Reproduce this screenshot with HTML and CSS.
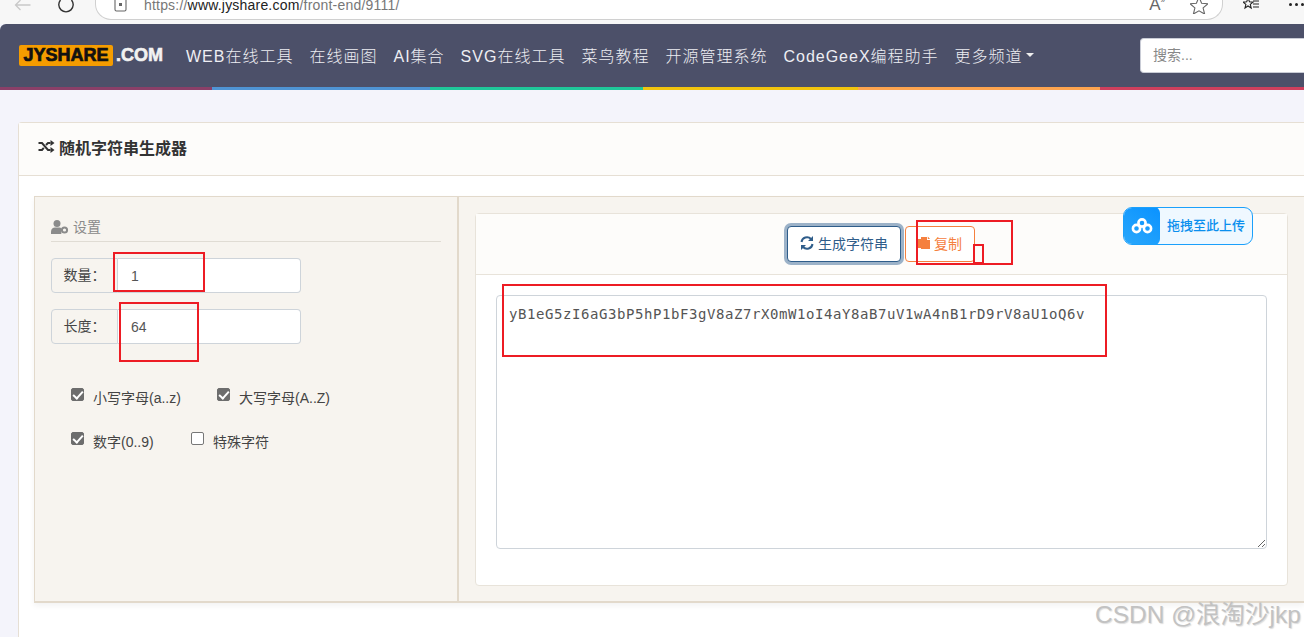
FILE: index.html
```html
<!DOCTYPE html>
<html lang="zh-CN">
<head>
<meta charset="utf-8">
<title>随机字符串生成器</title>
<link rel="stylesheet" href="styles.css">
</head>
<body>
<div class="chrome">
  <svg class="c-back" width="17" height="14" viewBox="0 0 17 14"><path d="M16.500 5H1.500M6.500 0L1.500 5l5 5" fill="none" stroke="#c9c9c9" stroke-width="1.300"/></svg>
  <svg class="c-reload" width="18" height="14" viewBox="0 0 18 14"><path d="M3.500 0a7.200 7.200 0 1 0 11 0" fill="none" stroke="#333" stroke-width="1.400"/></svg>
  <div class="addr">
    <svg class="addr-ic" width="13" height="12" viewBox="0 0 13 12"><path d="M1 0v9.500a1.500 1.500 0 0 0 1.500 1.500h8A1.500 1.500 0 0 0 12 9.500V0" fill="none" stroke="#666" stroke-width="1.100"/><rect x="5" y="3" width="3" height="3" fill="#666"/></svg>
    <span class="url"><span class="dim">https://</span>www.jyshare.com<span class="dim">/front-end/9111/</span></span>
    <span class="addr-a">A<sup>»</sup></span>
    <svg class="addr-star" width="18" height="14" viewBox="0 0 18 14"><path d="M9 -3l2.600 6.200 6.400.5-4.900 4.200 1.500 6.100L9 10.800l-5.600 3.200 1.500-6.100L0 3.700l6.400-.5z" fill="none" stroke="#666" stroke-width="1.100"/></svg>
  </div>
  <svg class="c-fav" width="18" height="12" viewBox="0 0 18 12"><path d="M5 -2l1.500 3.800 3.500.3-2.700 2.300.9 3.600L5 6l-3 2 .9-3.600L.2 2.100l3.500-.3z" fill="none" stroke="#222" stroke-width="1.100"/><path d="M10 1h6M10 4h6M10 7h6" stroke="#222" stroke-width="1"/></svg>
  <span class="c-more"><i></i><i></i><i></i></span>
</div>

<header class="nav">
  <div class="nav-row">
    <a class="logo"><span class="logo-box">JYSHARE</span><span class="logo-com">.COM</span></a>
    <a class="nav-link">WEB在线工具</a>
    <a class="nav-link">在线画图</a>
    <a class="nav-link">AI集合</a>
    <a class="nav-link">SVG在线工具</a>
    <a class="nav-link">菜鸟教程</a>
    <a class="nav-link">开源管理系统</a>
    <a class="nav-link">CodeGeeX编程助手</a>
    <a class="nav-link more">更多频道<span class="caret"></span></a>
    <input class="search" placeholder="搜索...">
  </div>
  <div class="stripe"><i class="s1"></i><i class="s2"></i><i class="s3"></i><i class="s4"></i><i class="s5"></i><i class="s6"></i></div>
</header>

<main class="page">
  <section class="card">
    <div class="card-head">
      <svg width="17" height="13" viewBox="0 0 16 13"><path d="M0 3h3.500l6 7H12M0 10h3.500l1.800-2.100M7.500 5L9.500 3H12" fill="none" stroke="#333" stroke-width="2"/><path d="M12 0l4 3-4 3zM12 7l4 3-4 3z" fill="#333"/></svg>
      <h1>随机字符串生成器</h1>
    </div>
    <div class="card-body">
      <div class="panels">
        <aside class="left">
          <div class="legend">
            <svg width="18" height="14" viewBox="0 0 18 14"><circle cx="6" cy="3.500" r="3.500" fill="#8b8b8b"/><path d="M0 14v-2.500C0 9 2 7.500 4 7.500h4.500c.8 0 1.300.2 1.800.5V14z" fill="#8b8b8b"/><circle cx="13.500" cy="10" r="2.600" fill="none" stroke="#8b8b8b" stroke-width="2"/></svg>
            <span>设置</span>
          </div>
          <div class="group"><label class="addon">数量：</label><input class="ginput" value="1"></div>
          <div class="group"><label class="addon">长度：</label><input class="ginput" value="64"></div>
          <div class="checks">
            <div class="check-row">
              <label class="chk w-a"><span class="box on"></span>小写字母(a..z)</label>
              <label class="chk"><span class="box on"></span>大写字母(A..Z)</label>
            </div>
            <div class="check-row">
              <label class="chk w-b"><span class="box on"></span>数字(0..9)</label>
              <label class="chk"><span class="box"></span>特殊字符</label>
            </div>
          </div>
        </aside>
        <div class="right">
          <div class="out">
            <div class="out-head">
              <button class="btn btn-gen">
                <svg width="14" height="14" viewBox="0 0 14 14"><path d="M1.500 6A5.500 5.500 0 0 1 11 3M12.500 8A5.500 5.500 0 0 1 3 11" fill="none" stroke="#2f5d8a" stroke-width="2"/><path d="M13 0v5H8zM1 14V9h5z" fill="#2f5d8a"/></svg>
                生成字符串
              </button>
              <button class="btn btn-copy">
                <svg width="12" height="14" viewBox="0 0 12 14"><path d="M0 3h3V1h6v3h3v9H3v-1H0z" fill="#f5803e"/><path d="M9.800 0.500L12 3H9.800z" fill="#f5803e"/></svg>
                复制
              </button>
            </div>
            <div class="out-body">
              <textarea class="result" spellcheck="false">yB1eG5zI6aG3bP5hP1bF3gV8aZ7rX0mW1oI4aY8aB7uV1wA4nB1rD9rV8aU1oQ6v</textarea>
            </div>
          </div>
        </div>
      </div>
    </div>
  </section>
</main>

<div class="upload">
  <span class="up-ic"><svg width="22" height="16" viewBox="0 0 22 16"><g fill="none" stroke="#fff" stroke-width="2.600"><circle cx="5.500" cy="10.500" r="3.600"/><circle cx="16.500" cy="10.500" r="3.600"/><circle cx="11" cy="5" r="3.600"/></g></svg></span>
  <span class="up-txt">拖拽至此上传</span>
</div>

<i class="mark m1"></i><i class="mark m2"></i><i class="mark m3"></i><i class="mark m4"></i><i class="mark m5"></i>
<div class="wm">CSDN @浪淘沙jkp</div>
</body>
</html>
```
FILE: styles.css
```css
* { box-sizing: border-box; }
html, body { margin: 0; height: 637px; overflow: hidden; }
body { font-family: "Liberation Sans", "Noto Sans CJK SC", sans-serif; background: #f4f4fb; position: relative; color: #333; }

.chrome { height: 24px; background: #f7f7f7; display: flex; align-items: flex-start; overflow: hidden; }
.c-back { margin: 0 0 0 14px; }
.c-reload { margin: 0 0 0 26px; }
.addr { width: 1129px; height: 20px; margin-left: 20px; background: #fff; border: 1px solid #d0d0d0; border-top: 0; border-radius: 0 0 16px 16px; display: flex; align-items: flex-start; padding-left: 18px; overflow: hidden; }
.url { font-size: 14px; line-height: 11px; margin-left: 17px; letter-spacing: .2px; color: #222; height: 12px; }
.dim { color: #777; }
.addr-a { margin-left: auto; font-size: 17px; line-height: 10px; color: #666; height: 12px; }
.addr-a sup { font-size: 8px; line-height: 0; }
.addr-star { margin: 0 14px 0 25px; }
.c-fav { margin-left: 20px; }
.c-more { margin-left: 28px; display: flex; gap: 3px; padding-top: 3px; }
.c-more i { width: 3px; height: 3px; border-radius: 50%; background: #222; }

.nav { background: #4c5069; height: 66px; display: flex; flex-direction: column; justify-content: space-between; border-radius: 6px 0 0 0; }
.nav-row { height: 63px; display: flex; align-items: center; padding-left: 19px; }
.logo { display: flex; align-items: center; margin-right: 23px; font-weight: 700; font-family: "Liberation Sans", sans-serif; }
.logo-box { background: #f59c00; color: #111; font-size: 18px; line-height: 21px; height: 21px; width: 94px; text-align: center; border-radius: 2px; font-weight: 700; -webkit-text-stroke: .7px #111; white-space: nowrap; }
.logo-com { color: #f2f2f2; font-size: 18px; margin-left: 3px; -webkit-text-stroke: .6px #f2f2f2; }
.nav-link { color: #eeeef3; font-family: "Liberation Sans", "Noto Sans CJK SC", sans-serif; font-size: 16px; letter-spacing: 1px; margin: 0 16px 2px 0; white-space: nowrap; font-weight: 300; }
.more { display: flex; align-items: center; margin-right: 0; }
.caret { width: 0; height: 0; border: 4px solid transparent; border-top-color: #eee; border-bottom: 0; margin-left: 3px; }
.search { margin-left: auto; width: 164px; height: 35px; margin-bottom: 1px; border: 1px solid #c9ccd6; border-right: 0; border-radius: 4px 0 0 4px; padding: 0 12px; font: 14px "Liberation Sans", "Noto Sans CJK SC", sans-serif; background: #fff; outline: 0; }
.search::placeholder { color: #888; opacity: 1; }
.stripe { height: 3px; display: flex; }
.stripe i { display: block; height: 3px; }
.s1 { width: 212px; background: #8a3f68; }
.s2 { width: 218px; background: #4f94d4; }
.s3 { width: 213px; background: #1fc79a; }
.s4 { width: 215px; background: #f1c40f; }
.s5 { width: 242px; background: #fda44f; }
.s6 { flex: 1; background: #cf3f5d; }

.page { padding: 32px 0 0 18px; }
.card { width: 1286px; height: 515px; background: #fff; border: 1px solid #e6dfd4; border-right: 0; border-bottom: 0; border-radius: 4px 0 0 0; }
.card-head { height: 53px; background: #fdfcfa; border-bottom: 1px solid #e6dfd4; display: flex; align-items: center; padding: 0 0 5px 19px; gap: 4px; }
.card-head h1 { margin: 0; font-size: 16px; font-weight: 700; color: #333; }
.card-body { padding: 20px 0 0 15px; }
.panels { display: flex; height: 407px; background: #f7f4ef; border: 1px solid #e2d9cb; border-bottom-width: 2px; border-right: 0; box-shadow: 0 3px 6px rgba(0,0,0,.05); }
.left { width: 424px; flex: none; border-right: 2px solid #e2d9cb; padding: 21px 16px 0 16px; }
.legend { height: 24px; border-bottom: 1px solid #e0dcd4; display: flex; align-items: flex-start; gap: 4px; color: #8a8a8a; font-size: 14px; line-height: 18px; }
.legend svg { margin-top: 2px; }
.group { width: 250px; height: 35px; display: flex; margin-top: 16px; }
.addon { width: 67px; flex: none; display: flex; align-items: center; justify-content: center; background: #f7f4ef; border: 1px solid #ced4da; border-radius: 4px 0 0 4px; padding-bottom: 3px; font-size: 14px; color: #444; }
.ginput { flex: 1; min-width: 0; border: 1px solid #ced4da; border-left: 0; border-radius: 0 4px 4px 0; background: #fff; padding: 0 13px; font: 14px "Liberation Sans", sans-serif; color: #555; outline: 0; }
.checks { margin-top: 42px; padding-left: 20px; display: flex; flex-direction: column; gap: 23px; }
.check-row { display: flex; height: 21px; align-items: center; }
.chk { display: flex; align-items: center; font-size: 14px; color: #444; white-space: nowrap; }
.w-a { width: 146px; }
.w-b { width: 120px; }
.box { width: 13px; height: 13px; border: 1px solid #777; border-radius: 2px; background: #fff; margin-right: 9px; position: relative; top: -2px; }
.box.on { background: #6d6d6d; border-color: #6d6d6d; }
.box.on::after { content: ""; position: absolute; left: 3px; top: 0; width: 4px; height: 8px; border: solid #fff; border-width: 0 2px 2px 0; transform: rotate(42deg); }

.right { flex: 1; padding: 16px 0 0 16px; }
.out { width: 813px; height: 373px; background: #fff; border: 1px solid #e8e3da; border-radius: 4px; }
.out-head { height: 61px; background: #fdfcfa; border-bottom: 1px solid #e8e3da; display: flex; justify-content: center; align-items: center; gap: 4px; padding-right: 1px; }
.btn { height: 36px; border-radius: 4px; font: 14px "Liberation Sans", "Noto Sans CJK SC", sans-serif; background: #fff; display: flex; align-items: center; justify-content: center; gap: 4px; padding: 0 0 2px; margin: 0; }
.btn-gen { width: 114px; border: 1px solid #2f5d8a; color: #2f5d8a; box-shadow: 0 0 0 3px #9cb2c8; }
.btn-copy { width: 70px; border: 1px solid #f5803e; color: #f5803e; }
.out-body { padding: 20px 20px 0 20px; }
.result { display: block; width: 771px; height: 254px; border: 1px solid #ced4da; border-radius: 4px; padding: 8px 12px; background: #fff; font: 14px/20px "DejaVu Sans Mono", monospace; letter-spacing: .57px; color: #555; outline: 0; resize: both; }

.upload { position: absolute; left: 1123px; top: 207px; width: 130px; height: 38px; display: flex; background: #eff8ff; border: 1px solid #1ba0fb; border-radius: 9px; overflow: hidden; }
.up-ic { width: 37px; margin: -1px 0 -1px -1px; flex: none; background: linear-gradient(35deg, #2aa8fb, #0a92ff); border-radius: 9px 6px 6px 9px; display: flex; align-items: center; justify-content: center; }
.up-txt { font-size: 13px; line-height: 36px; font-weight: 500; color: #0a8fee; margin-left: 7px; white-space: nowrap; }

.mark { position: absolute; border: 2px solid #ed1c24; display: block; }
.m1 { left: 113px; top: 252px; width: 92px; height: 40px; }
.m2 { left: 119px; top: 302px; width: 80px; height: 60px; }
.m3 { left: 916px; top: 220px; width: 97px; height: 45px; }
.m4 { left: 973px; top: 244px; width: 11px; height: 20px; }
.m5 { left: 502px; top: 284px; width: 605px; height: 73px; }

.wm { position: absolute; left: 1095px; top: 600px; font-size: 24.500px; line-height: 30px; color: #c2c2c2; white-space: nowrap; text-shadow: 1px 1px 1px rgba(120,120,120,.25); }
```
